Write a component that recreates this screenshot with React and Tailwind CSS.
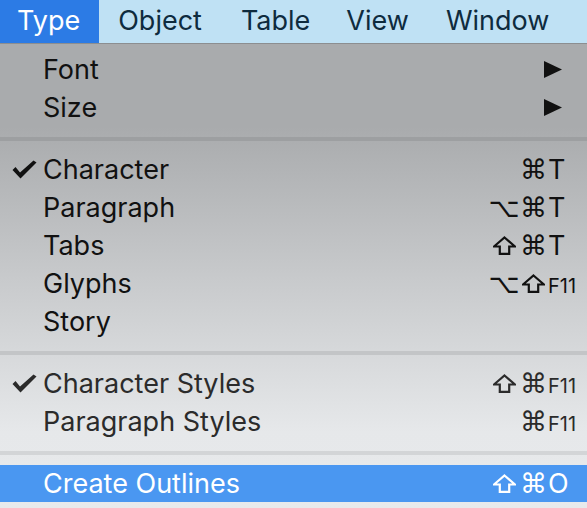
import React from "react";

const Cmd = () => (
  <span className="w-[23px] flex justify-center font-['DejaVu_Sans'] text-[27px] leading-none">⌘</span>
);
const Opt = () => (
  <span className="w-[24px] flex justify-center font-['DejaVu_Sans'] text-[27px] leading-none">⌥</span>
);
const Shift = () => (
  <span className="w-[23px] flex justify-center">
    <svg width="23" height="19" viewBox="0 0 23 19" fill="none" stroke="currentColor" strokeWidth="2.2" strokeLinejoin="miter">
      <path d="M11.5 1.5 L22 10.5 H16.2 V17.8 H6.8 V10.5 H1 Z" />
    </svg>
  </span>
);

const Check = () => (
  <svg width="25" height="19" viewBox="0 0 25 19" className="block">
    <path d="M0.5 10 L3.5 7 L8 12.5 L21.5 0.5 L24.5 2.5 L8.5 18.5 Z" fill="currentColor" />
  </svg>
);

const Row = ({ label, check, mods, keyc, arrow, dim, hi, h = "h-[38px]" }) => (
  <div
    className={`flex items-center ${h} pl-[12px] ${
      hi ? "bg-[#4a97f1] text-white" : dim ? "text-[#2b2b2b]" : "text-[#111]"
    }`}
  >
    <span className="w-[31px] flex items-center">{check ? <Check /> : null}</span>
    <span className="flex-1 text-[27px] leading-none">{label}</span>
    {arrow && (
      <svg className="mr-[25px]" width="18" height="17" viewBox="0 0 18 17">
        <path d="M0 0 L18 8.5 L0 17 Z" fill="currentColor" />
      </svg>
    )}
    {keyc && (
      <>
        <span className="flex items-center gap-[6px]">{mods}</span>
        <span className="w-[42px] pl-[3px] text-[27px] leading-none">{keyc}</span>
      </>
    )}
  </div>
);

const Sep = ({ c }) => <div className={`h-[4px] ${c}`} />;

const F11 = () => <span className="text-[20px]">F11</span>;

export default function App() {
  return (
    <div className="w-[587px] h-[508px] overflow-hidden font-['Inter',sans-serif] bg-[linear-gradient(to_bottom,#a9abad_0%,#a9abad_25%,#c8cacc_55%,#e6e8ea_85%,#e8eaec_100%)]">
      <div className="flex h-[44px] bg-[#bfe1f4] text-[#0e2b3e] text-[27px] border-b border-[#8c8e90]">
        <div className="flex items-center bg-[#2c7be5] text-white pl-[17px] pr-[19px]">Type</div>
        <div className="flex items-center pl-[19px]">Object</div>
        <div className="flex items-center pl-[39px]">Table</div>
        <div className="flex items-center pl-[36px]">View</div>
        <div className="flex items-center pl-[37px]">Window</div>
      </div>
      <div className="pt-[6px] pb-[11px]">
        <Row label="Font" arrow />
        <Row label="Size" arrow />
      </div>
      <Sep c="bg-[#9d9fa1]" />
      <div className="pt-[9px] pb-[11px]">
        <Row label="Character" check mods={<Cmd />} keyc="T" />
        <Row label="Paragraph" mods={<><Opt /><Cmd /></>} keyc="T" />
        <Row label="Tabs" mods={<><Shift /><Cmd /></>} keyc="T" />
        <Row label="Glyphs" mods={<><Opt /><Shift /></>} keyc={<F11 />} />
        <Row label="Story" />
      </div>
      <Sep c="bg-[#c3c5c7]" />
      <div className="pt-[9px] pb-[11px]">
        <Row label="Character Styles" check dim mods={<><Shift /><Cmd /></>} keyc={<F11 />} />
        <Row label="Paragraph Styles" dim mods={<Cmd />} keyc={<F11 />} />
      </div>
      <Sep c="bg-[#d3d5d7]" />
      <div className="pt-[10px]">
        <Row label="Create Outlines" hi h="h-[37px]" mods={<><Shift /><Cmd /></>} keyc="O" />
      </div>
    </div>
  );
}
